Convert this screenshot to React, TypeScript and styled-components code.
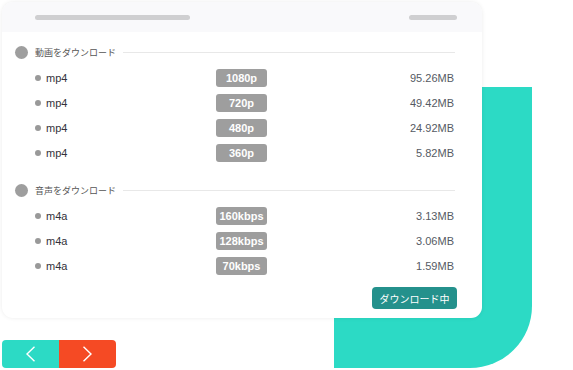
import React from "react";
import styled, { createGlobalStyle } from "styled-components";

const Global = createGlobalStyle`
  html, body { margin: 0; padding: 0; background: #fff; }
  body { font-family: "Liberation Sans", Arial, "Noto Sans CJK JP", sans-serif; }
`;

const TEAL = "#2cdac5";
const ORANGE = "#f54a24";

const Stage = styled.div`
  position: relative;
  width: 573px;
  height: 370px;
  padding: 2px 0 0 2px;
  box-sizing: border-box;
  overflow: hidden;
`;

const Decor = styled.div`
  position: absolute;
  left: 334px;
  top: 87px;
  width: 198px;
  height: 281px;
  background: ${TEAL};
  border-bottom-right-radius: 62px;
  z-index: 0;
`;

const Card = styled.div`
  position: relative;
  z-index: 1;
  width: 480px;
  height: 316px;
  background: #fff;
  border-radius: 11px;
  box-shadow: 0 0 4px rgba(0, 0, 0, 0.08);
  overflow: hidden;
  display: flex;
  flex-direction: column;
`;

const Header = styled.div`
  height: 30px;
  background: #f9f9fb;
  display: flex;
  align-items: center;
  justify-content: space-between;
  padding: 0 25px 0 33px;
`;

const Bar = styled.div<{ $w: number }>`
  width: ${(p) => p.$w}px;
  height: 5px;
  border-radius: 3px;
  background: #cfcfd1;
`;

const Body = styled.div`
  flex: 1;
  display: flex;
  flex-direction: column;
  padding: 13px 25px 8px 13px;
`;

const SectionHead = styled.div<{ $mt?: number }>`
  display: flex;
  align-items: center;
  height: 14px;
  margin-top: ${(p) => p.$mt ?? 0}px;
  margin-bottom: 6px;
  padding-right: 2px;
`;

const BigDot = styled.span`
  width: 13px;
  height: 13px;
  border-radius: 50%;
  background: #9e9e9e;
  flex: none;
`;

const SectionTitle = styled.span`
  margin-left: 7px;
  font-family: "Noto Sans CJK JP", sans-serif;
  font-size: 9px;
  color: #555;
  white-space: nowrap;
`;

const Rule = styled.span`
  flex: 1;
  height: 1px;
  background: #e8e8e8;
  margin-left: 7px;
`;

const Row = styled.div`
  display: grid;
  grid-template-columns: 181px 51px 1fr;
  align-items: center;
  height: 25px;
  padding-left: 20px;
  padding-right: 3px;
`;

const Label = styled.div`
  display: flex;
  align-items: center;
  font-size: 11px;
  color: #33333b;
`;

const SmallDot = styled.span`
  width: 6px;
  height: 6px;
  border-radius: 50%;
  background: #999;
  margin-right: 5px;
`;

const Badge = styled.span`
  height: 18px;
  border-radius: 3px;
  background: #9e9e9e;
  color: #fff;
  font-weight: bold;
  font-size: 11px;
  display: flex;
  align-items: center;
  justify-content: center;
`;

const Size = styled.span`
  text-align: right;
  font-size: 11px;
  color: #555a63;
`;

const Footer = styled.div`
  display: flex;
  justify-content: flex-end;
  margin-top: 9px;
`;

const DownloadBtn = styled.button`
  width: 85px;
  height: 22px;
  border: none;
  border-radius: 4px;
  background: #24918c;
  color: #fff;
  font-family: "Noto Sans CJK JP", sans-serif;
  font-size: 10px;
  padding: 0;
`;

const Nav = styled.div`
  position: relative;
  z-index: 1;
  display: flex;
  margin-top: 22px;
  width: 114px;
  height: 28px;
  border-radius: 4px;
  overflow: hidden;
`;

const NavBtn = styled.button<{ $bg: string }>`
  flex: 1;
  border: none;
  padding: 0;
  background: ${(p) => p.$bg};
  display: flex;
  align-items: center;
  justify-content: center;
`;

const Chevron = ({ dir }: { dir: "l" | "r" }) => (
  <svg width="11" height="16" viewBox="0 0 11 16">
    <path
      d={dir === "l" ? "M9.5 0.8 L2 8 L9.5 15.2" : "M1.5 0.8 L9 8 L1.5 15.2"}
      fill="none"
      stroke="#fff"
      strokeWidth="1.4"
    />
  </svg>
);

const video = [
  ["1080p", "95.26MB"],
  ["720p", "49.42MB"],
  ["480p", "24.92MB"],
  ["360p", "5.82MB"],
];
const audio = [
  ["160kbps", "3.13MB"],
  ["128kbps", "3.06MB"],
  ["70kbps", "1.59MB"],
];

export default function App() {
  return (
    <>
      <Global />
      <Stage>
        <Decor />
        <Card>
          <Header>
            <Bar $w={155} />
            <Bar $w={48} />
          </Header>
          <Body>
            <SectionHead>
              <BigDot />
              <SectionTitle>動画をダウンロード</SectionTitle>
              <Rule />
            </SectionHead>
            {video.map(([q, s]) => (
              <Row key={q}>
                <Label>
                  <SmallDot />
                  mp4
                </Label>
                <Badge>{q}</Badge>
                <Size>{s}</Size>
              </Row>
            ))}
            <SectionHead $mt={18}>
              <BigDot />
              <SectionTitle>音声をダウンロード</SectionTitle>
              <Rule />
            </SectionHead>
            {audio.map(([q, s]) => (
              <Row key={q}>
                <Label>
                  <SmallDot />
                  m4a
                </Label>
                <Badge>{q}</Badge>
                <Size>{s}</Size>
              </Row>
            ))}
            <Footer>
              <DownloadBtn>ダウンロード中</DownloadBtn>
            </Footer>
          </Body>
        </Card>
        <Nav>
          <NavBtn $bg={TEAL}>
            <Chevron dir="l" />
          </NavBtn>
          <NavBtn $bg={ORANGE}>
            <Chevron dir="r" />
          </NavBtn>
        </Nav>
      </Stage>
    </>
  );
}
